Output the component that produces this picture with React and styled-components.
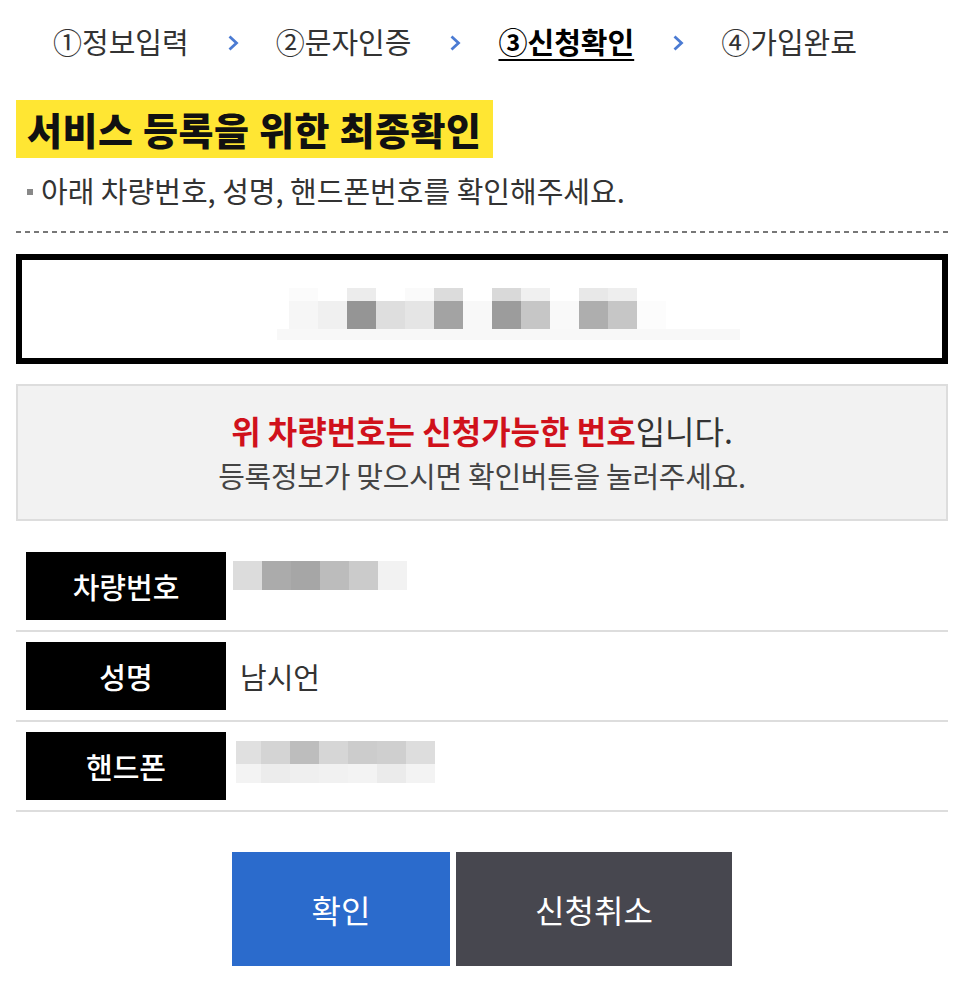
import React from 'react'
import styled, { createGlobalStyle } from 'styled-components'

const GlobalStyle = createGlobalStyle`
  body {
    margin: 0;
    background: #fff;
    font-family: 'Noto Sans CJK KR', 'Noto Sans', sans-serif;
    color: #333;
  }
`

const Page = styled.div`
  width: 966px;
  box-sizing: border-box;
  padding: 0 18px 30px 16px;
`

const StepNav = styled.nav`
  display: flex;
  align-items: center;
  height: 86px;
  padding-left: 37px;
`

const Step = styled.span`
  font-size: 29px;
  color: ${p => (p.active ? '#000' : '#333')};
  font-weight: ${p => (p.active ? 700 : 400)};
  text-decoration: ${p => (p.active ? 'underline' : 'none')};
  text-decoration-thickness: 2px;
  text-underline-offset: 5px;
  white-space: nowrap;
  margin-top: -4px;
`

const Chevron = styled.svg`
  width: 14px;
  height: 18px;
  margin: 0 36px 0 37px;
  flex: 0 0 auto;
`

const Title = styled.h2`
  display: inline-block;
  margin: 14px 0 0;
  height: 58px;
  line-height: 58px;
  padding: 0 11px;
  background: #ffe633;
  color: #111;
  font-size: 38px;
  font-weight: 900;
  letter-spacing: 0.6px;
`

const Guide = styled.p`
  display: flex;
  align-items: center;
  margin: 14px 0 0;
  padding-left: 11px;
  height: 36px;
  font-size: 29px;
  color: #333;
`

const Bullet = styled.span`
  width: 6px;
  height: 6px;
  background: #888;
  margin-right: 8px;
  margin-top: 4px;
`

const Dashed = styled.div`
  margin-top: 23px;
  height: 2px;
  background: repeating-linear-gradient(to right, #777 0 5px, transparent 5px 9px);
`

const PlateBox = styled.div`
  margin-top: 21px;
  height: 110px;
  box-sizing: border-box;
  border: 6px solid #000;
  display: flex;
  justify-content: center;
  align-items: flex-start;
  padding: 28px 0 0 53px;
`

const Notice = styled.div`
  margin-top: 20px;
  border: 2px solid #ddd;
  background: #f2f2f2;
  padding: 22px 0 21px;
  text-align: center;
`

const NoticeLine = styled.p`
  margin: 0;
  font-size: ${p => (p.big ? '32px' : '29px')};
  line-height: ${p => (p.big ? '44px' : '46px')};
  color: ${p => (p.big ? '#333' : '#444')};
  letter-spacing: ${p => (p.big ? '0px' : '-0.3px')};
`

const Em = styled.strong`
  color: #d0111b;
  font-weight: 700;
`

const InfoList = styled.ul`
  list-style: none;
  margin: 21px 0 0;
  padding: 0;
`

const InfoRow = styled.li`
  display: flex;
  align-items: flex-start;
  padding: 10px 0 10px 10px;
  border-bottom: 2px solid #ddd;
`

const Label = styled.div`
  flex: 0 0 200px;
  height: 68px;
  background: #000;
  color: #fff;
  font-size: 29px;
  font-weight: 500;
  display: flex;
  align-items: center;
  justify-content: center;
`

const Value = styled.div`
  margin-left: 14px;
  line-height: 68px;
  font-size: 29px;
  color: #333;
`

const Mosaic = styled.svg`
  display: block;
  margin: ${p => p.offset || '0'};
`

const Buttons = styled.div`
  display: flex;
  justify-content: center;
  gap: 6px;
  margin-top: 40px;
`

const Button = styled.button`
  width: ${p => p.w}px;
  height: 114px;
  border: 0;
  background: ${p => (p.primary ? '#2b6bcc' : '#47474f')};
  color: #fff;
  font-family: inherit;
  font-size: 32px;
  cursor: pointer;
`

const ChevronIcon = () => (
  <Chevron viewBox="0 0 14 18">
    <polyline points="3.5,2.5 10.5,9 3.5,15.5" fill="none" stroke="#4b7bd3" strokeWidth="2.8" strokeLinejoin="miter" />
  </Chevron>
)

const plateTop = ['#fbfbfb', '#fff', '#ececec', '#fff', '#fafafa', '#dcdcdc', '#fff', '#d9d9d9', '#f0f0f0', '#fff', '#e8e8e8', '#eeeeee', '#fff']
const plateBottom = ['#f6f6f6', '#f0f0f0', '#959595', '#dedede', '#e5e5e5', '#a3a3a3', '#f8f8f8', '#9c9c9c', '#c6c6c6', '#f9f9f9', '#aeaeae', '#c6c6c6', '#fcfcfc']

const carCells = ['#dcdcdc', '#ababab', '#a6a6a6', '#bcbcbc', '#cbcbcb', '#f2f2f2']
const phoneTop = ['#e0e0e0', '#d4d4d4', '#bdbdbd', '#d6d6d6', '#cccccc', '#cfcfcf', '#dddddd']
const phoneBottom = ['#f3f3f3', '#ececec', '#efefef', '#f1f1f1', '#f3f3f3', '#ebebeb', '#f3f3f3']

const PlateMosaic = () => (
  <Mosaic width="463" height="52" viewBox="0 0 463 52">
    {plateTop.map((c, i) => <rect key={'t' + i} x={12 + i * 29} y="0" width="29" height="13" fill={c} />)}
    {plateBottom.map((c, i) => <rect key={'b' + i} x={12 + i * 29} y="13" width="29" height="28" fill={c} />)}
    <rect x="0" y="41" width="463" height="11" fill="#f8f8f8" />
  </Mosaic>
)

const CarMosaic = () => (
  <Mosaic width="174" height="29" viewBox="0 0 174 29" offset="9px 0 0 -7px">
    {carCells.map((c, i) => <rect key={i} x={i * 29} y="0" width="29" height="29" fill={c} />)}
  </Mosaic>
)

const PhoneMosaic = () => (
  <Mosaic width="199" height="42" viewBox="0 0 199 42" offset="9px 0 0 -4px">
    {phoneTop.map((c, i) => <rect key={'t' + i} x={i === 0 ? 0 : 25 + (i - 1) * 29} y="0" width={i === 0 ? 25 : 29} height="23" fill={c} />)}
    {phoneBottom.map((c, i) => <rect key={'b' + i} x={i === 0 ? 0 : 25 + (i - 1) * 29} y="23" width={i === 0 ? 25 : 29} height="19" fill={c} />)}
  </Mosaic>
)

const steps = ['①정보입력', '②문자인증', '③신청확인', '④가입완료']

const App = () => {
  return (
    <Page>
      <GlobalStyle />

      <StepNav>
        {steps.map((s, i) => (
          <React.Fragment key={s}>
            <Step active={i === 2}>{s}</Step>
            {i < steps.length - 1 && <ChevronIcon />}
          </React.Fragment>
        ))}
      </StepNav>

      <Title>서비스 등록을 위한 최종확인</Title>
      <Guide><Bullet />아래 차량번호, 성명, 핸드폰번호를 확인해주세요.</Guide>

      <Dashed />

      <PlateBox>
        <PlateMosaic />
      </PlateBox>

      <Notice>
        <NoticeLine big><Em>위 차량번호는 신청가능한 번호</Em>입니다.</NoticeLine>
        <NoticeLine>등록정보가 맞으시면 확인버튼을 눌러주세요.</NoticeLine>
      </Notice>

      <InfoList>
        <InfoRow>
          <Label>차량번호</Label>
          <Value><CarMosaic /></Value>
        </InfoRow>
        <InfoRow>
          <Label>성명</Label>
          <Value>남시언</Value>
        </InfoRow>
        <InfoRow>
          <Label>핸드폰</Label>
          <Value><PhoneMosaic /></Value>
        </InfoRow>
      </InfoList>

      <Buttons>
        <Button primary w={218}>확인</Button>
        <Button w={276}>신청취소</Button>
      </Buttons>
    </Page>
  )
}

export default App
